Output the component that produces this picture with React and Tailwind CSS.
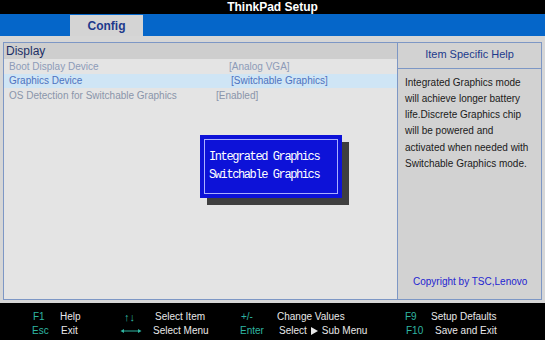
import React from "react";

function Key({ children, className = "" }) {
  return <div className={"text-[#2fb6a2] whitespace-nowrap " + className}>{children}</div>;
}
function Desc({ children, className = "" }) {
  return <div className={"text-[#e8e8e8] whitespace-nowrap " + className}>{children}</div>;
}

export default function App() {
  return (
    <div className="w-[545px] h-[340px] flex flex-col bg-[#d6d6d6] overflow-hidden font-['Liberation_Sans',Arial,sans-serif]">
      {/* Title bar */}
      <div className="h-[14px] bg-black flex items-center justify-center text-white font-bold text-[12px] leading-none">
        ThinkPad Setup
      </div>
      {/* Tab bar */}
      <div className="h-[22px] bg-[#0566c9] flex pl-[70px]">
        <div className="w-[73px] mt-[1px] bg-[#d4d4d4] flex items-center justify-center text-[12px] font-bold text-[#1d3a8c]">
          Config
        </div>
      </div>
      {/* Main */}
      <div className="flex-1 px-[3px] pt-[6px] pb-[3px] flex flex-col">
        <div className="flex-1 flex border border-[#7d97c5]">
          {/* Left panel */}
          <div className="relative w-[394px] bg-[#e4e4e4] border-r border-[#7d97c5]">
            <div className="h-[16px] bg-[#cecece] pl-[2px] text-[12px] leading-[16px] text-[#1c2f66]">
              Display
            </div>
            <div className="h-[14.5px] flex items-center pl-[5px] text-[10px] text-[#8d9bb8]">
              <span className="w-[220px]">Boot Display Device</span>
              <span>[Analog VGA]</span>
            </div>
            <div className="h-[14.5px] flex items-center pl-[5px] text-[10px] text-[#4d72c0] bg-[#cfe5f5]">
              <span className="w-[222px]">Graphics Device</span>
              <span>[Switchable Graphics]</span>
            </div>
            <div className="h-[14.5px] flex items-center pl-[5px] text-[10px] text-[#8a95aa]">
              <span className="w-[207px]">OS Detection for Switchable Graphics</span>
              <span>[Enabled]</span>
            </div>

            {/* Popup */}
            <div className="absolute left-[196px] top-[92px] w-[142px] h-[63px] bg-[#0d12d8] shadow-[7px_7px_0_#3f3f3f] p-[4px]">
              <div className="h-full border border-[#aab0ff] pl-[4px] pt-[9px] text-white font-['Liberation_Mono',monospace] text-[12px] tracking-[-1.4px] leading-[17.6px]">
                <div>Integrated Graphics</div>
                <div>Switchable Graphics</div>
              </div>
            </div>
          </div>
          {/* Right panel */}
          <div className="flex-1 flex flex-col bg-[#d2d2d2]">
            <div className="h-[26px] flex items-center justify-center pb-[3px] border-b border-[#7d97c5] text-[11px] text-[#1d3a8c]">
              Item Specific Help
            </div>
            <div className="pl-[7px] pt-[5.5px] text-[10px] leading-[16.3px] text-[#1a1a1a] whitespace-nowrap">
              Integrated Graphics mode<br />
              will achieve longer battery<br />
              life.Discrete Graphics chip<br />
              will be powered and<br />
              activated when needed with<br />
              Switchable Graphics mode.
            </div>
            <div className="mt-auto pb-[10px] pl-[15px] text-[10px] leading-[14px] text-[#2424d0] whitespace-nowrap">
              Copyright by TSC,Lenovo
            </div>
          </div>
        </div>
      </div>
      {/* Footer */}
      <div className="h-[37px] bg-black pt-[7px] pl-[32px] text-[10px] leading-[14px]">
        <div className="grid grid-cols-[28px_60px_33px_87px_37px_128px_26px_1fr]">
          <Key className="ml-[1px]">F1</Key>
          <Desc>Help</Desc>
          <Key className="ml-[4px] text-[11px]">↑↓</Key>
          <Desc className="ml-[2px]">Select Item</Desc>
          <Key className="ml-[1px]">+/-</Key>
          <Desc>Change Values</Desc>
          <Key>F9</Key>
          <Desc>Setup Defaults</Desc>

          <Key>Esc</Key>
          <Desc className="ml-[1px]">Exit</Desc>
          <div className="flex items-center h-[14px]">
            <svg width="22" height="6" viewBox="0 0 22 6">
              <line x1="3" y1="3" x2="19" y2="3" stroke="#2fb6a2" strokeWidth="1" />
              <path d="M0.5 3 L4 1 L4 5 Z" fill="#2fb6a2" />
              <path d="M21.5 3 L18 1 L18 5 Z" fill="#2fb6a2" />
            </svg>
          </div>
          <Desc>Select Menu</Desc>
          <Key>Enter</Key>
          <Desc className="ml-[2px] flex items-center">
            Select
            <svg width="7" height="8" viewBox="0 0 7 8" className="mx-[4px]">
              <path d="M0 0 L7 4 L0 8 Z" fill="#e8e8e8" />
            </svg>
            Sub Menu
          </Desc>
          <Key className="ml-[1px]">F10</Key>
          <Desc className="ml-[4px]">Save and Exit</Desc>
        </div>
      </div>
    </div>
  );
}
